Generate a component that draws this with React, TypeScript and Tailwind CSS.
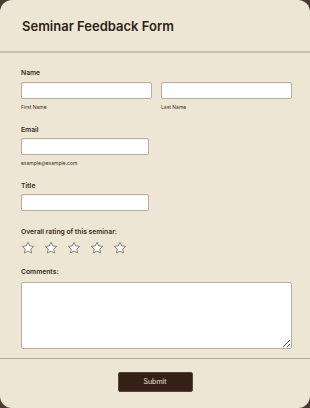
import { FC } from 'react'

const Star: FC = () => (
    <svg width="14" height="14" viewBox="0 0 24 24" className="block">
        <path
            d="M12 2.3l3 6.1 6.7.8-4.9 4.7 1.3 6.6L12 17.3l-6.1 3.2 1.3-6.6-4.9-4.7 6.7-.8z"
            fill="#ffffff"
            stroke="#7d716a"
            strokeWidth="1.5"
            strokeLinejoin="round"
        />
    </svg>
)

const Label: FC<{ children: string; className?: string }> = ({ children, className = '' }) => (
    <div className={`text-[6.75px] font-semibold text-[#3b2a22] leading-[10px] ${className}`}>{children}</div>
)

const Hint: FC<{ children: string }> = ({ children }) => (
    <div className="text-[5px] text-[#3b2a22] leading-[7px] mt-[5px]">{children}</div>
)

const inputCls =
    'h-[17px] bg-white border border-[#b9ae9f] rounded-[2px] shadow-[inset_0_1px_1px_rgba(0,0,0,0.06)]'

const App: FC = () => {
    return (
        <div className="w-[310px] h-[408px] bg-[#4a3b35]" style={{ fontFamily: 'Inter, "Noto Sans", sans-serif' }}>
            <div className="w-full h-full bg-[#eee6d5] rounded-[12px] flex flex-col">
                <div className="h-[53px] px-[22px] pt-[16px] border-b-2 border-[#cbc1b0]">
                    <h1 className="text-[13px] font-semibold text-[#2e1f18] leading-[20px]">
                        Seminar Feedback Form
                    </h1>
                </div>
                <div className="flex flex-col pl-[21px] pr-[18px] pt-[15px] border-b border-[#b6a994] h-[306px]">
                    <Label>Name</Label>
                    <div className="flex gap-[9px] mt-[4px]">
                        <div className="flex-1">
                            <div className={inputCls} />
                            <Hint>First Name</Hint>
                        </div>
                        <div className="flex-1">
                            <div className={inputCls} />
                            <Hint>Last Name</Hint>
                        </div>
                    </div>
                    <Label className="mt-[14px]">Email</Label>
                    <div className={`${inputCls} w-[128px] mt-[3px]`} />
                    <Hint>example@example.com</Hint>
                    <Label className="mt-[14px]">Title</Label>
                    <div className={`${inputCls} w-[128px] mt-[3px]`} />
                    <Label className="mt-[16px]">Overall rating of this seminar:</Label>
                    <div className="flex gap-[9px] mt-[4px]">
                        <Star />
                        <Star />
                        <Star />
                        <Star />
                        <Star />
                    </div>
                    <Label className="mt-[12px]">Comments:</Label>
                    <textarea className="mt-[5px] h-[67px] w-full bg-white border border-[#b9ae9f] rounded-[2px] resize-y" />
                </div>
                <div className="flex justify-center pt-[13px]">
                    <button className="w-[75px] h-[20px] bg-[#352017] text-[#e8e0d6] text-[7px] rounded-[2px] border border-[#5a4337]">
                        Submit
                    </button>
                </div>
            </div>
        </div>
    )
}

export default App
